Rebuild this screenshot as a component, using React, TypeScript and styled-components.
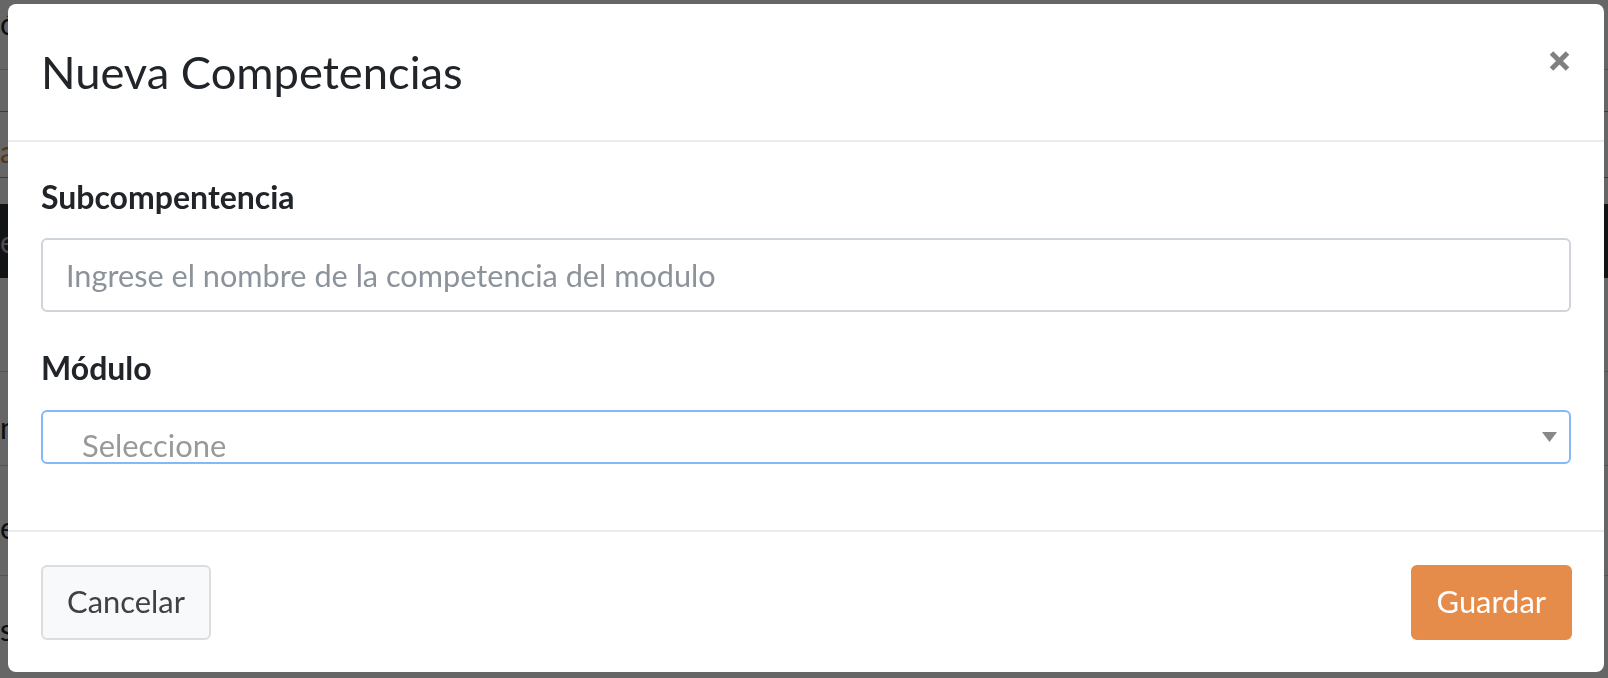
import React from "react";
import styled, { createGlobalStyle } from "styled-components";

const GlobalStyle = createGlobalStyle`
  html, body { margin: 0; padding: 0; }
  body {
    background: #ffffff;
    font-family: Lato, "Liberation Sans", sans-serif;
    color: #212529;
    overflow: hidden;
  }
  * { box-sizing: border-box; }
`;

const Page = styled.div`
  width: 1608px;
  height: 678px;
  display: flex;
  flex-direction: column;
  overflow: hidden;
`;

const PageRow = styled.div<{ $h: number; $line?: string; $bg?: string; $color?: string; $pad?: number }>`
  height: ${(p) => p.$h}px;
  flex-shrink: 0;
  border-bottom: ${(p) => (p.$line ? `1px solid ${p.$line}` : "none")};
  background: ${(p) => p.$bg || "transparent"};
  color: ${(p) => p.$color || "#222"};
  font-size: 30px;
  line-height: 1;
  padding-top: ${(p) => p.$pad ?? 0}px;
  padding-left: 0;
`;

const Overlay = styled.div`
  position: fixed;
  inset: 0;
  background: rgba(0, 0, 0, 0.6);
  display: flex;
  padding: 4px 4px 6px 8px;
`;

const Dialog = styled.div`
  flex: 1;
  background: #ffffff;
  border-radius: 8px;
  display: flex;
  flex-direction: column;
  overflow: hidden;
`;

const Header = styled.div`
  height: 138px;
  flex-shrink: 0;
  padding: 0 34px 0 33px;
  border-bottom: 2px solid #ebebf0;
  display: flex;
  align-items: center;
  justify-content: space-between;
`;

const Title = styled.h4`
  margin: 0;
  font-size: 45.3px;
  font-weight: 400;
  line-height: 1.2;
  color: #212529;
`;

const CloseButton = styled.button`
  align-self: flex-start;
  margin-top: 46px;
  width: 21px;
  height: 22px;
  padding: 0;
  border: 0;
  background: transparent;
  display: flex;
  cursor: pointer;
`;

const Body = styled.div`
  flex: 1;
  padding: 36px 33px 0 33px;
  display: flex;
  flex-direction: column;
  gap: 37px;
`;

const Group = styled.div`
  display: flex;
  flex-direction: column;
  gap: 22px;
`;

const Label = styled.label`
  font-size: 32px;
  font-weight: 700;
  line-height: 1.2;
  color: #212529;
`;

const TextInput = styled.input`
  height: 74px;
  width: 100%;
  border: 2px solid #ced4da;
  border-radius: 6px;
  padding: 0 23px;
  font-family: inherit;
  font-size: 30.7px;
  color: #495057;
  outline: none;
  &::placeholder {
    color: #8c939a;
  }
`;

const SelectBox = styled.div`
  height: 54px;
  border: 2px solid #86b7f7;
  border-radius: 6px;
  display: flex;
  align-items: center;
  justify-content: space-between;
  padding: 0 12px 0 39px;
  overflow: hidden;
`;

const SelectText = styled.span`
  align-self: flex-start;
  padding-top: 15px;
  font-size: 30.9px;
  line-height: 1.2;
  color: #999999;
`;

const Footer = styled.div`
  height: 142px;
  flex-shrink: 0;
  border-top: 2px solid #ebebf0;
  padding: 0 32px 0 33px;
  display: flex;
  align-items: center;
  justify-content: space-between;
`;

const Button = styled.button<{ $variant: "light" | "primary" }>`
  height: 75px;
  padding: 0 24px;
  border-radius: 6px;
  font-family: inherit;
  font-size: 30.9px;
  line-height: 1;
  cursor: pointer;
  border: 2px solid ${(p) => (p.$variant === "primary" ? "#e58c4a" : "#dddddd")};
  background: ${(p) => (p.$variant === "primary" ? "#e58c4a" : "#f8f9fa")};
  color: ${(p) => (p.$variant === "primary" ? "#ffffff" : "#3f4144")};
`;

export default function App() {
  return (
    <>
      <GlobalStyle />
      <Page>
        <PageRow $h={70} $line="#cfcfcf" $pad={8}>ó</PageRow>
        <PageRow $h={42} $line="#d9853f" />
        <PageRow $h={66} $line="#d9853f" $color="#d9853f" $pad={24}>a</PageRow>
        <PageRow $h={26} />
        <PageRow $h={74} $bg="#2e3035" $color="#b9bcc0" $pad={22}>e</PageRow>
        <PageRow $h={94} $line="#cfcfcf" />
        <PageRow $h={94} $line="#cfcfcf" $pad={40}>m</PageRow>
        <PageRow $h={110} $line="#cfcfcf" $pad={46}>e</PageRow>
        <PageRow $h={100} $pad={38}>s</PageRow>
      </Page>
      <Overlay>
        <Dialog role="dialog">
          <Header>
            <Title>Nueva Competencias</Title>
            <CloseButton aria-label="Cerrar">
              <svg width="21" height="22" viewBox="0 0 21 22">
                <path d="M2.5 3 L18.5 19 M18.5 3 L2.5 19" stroke="#808080" strokeWidth="5" strokeLinecap="butt" />
              </svg>
            </CloseButton>
          </Header>
          <Body>
            <Group>
              <Label>Subcompentencia</Label>
              <TextInput placeholder="Ingrese el nombre de la competencia del modulo" />
            </Group>
            <Group>
              <Label>Módulo</Label>
              <SelectBox>
                <SelectText>Seleccione</SelectText>
                <svg width="15" height="10" viewBox="0 0 15 10">
                  <path d="M0 0 H15 L7.5 10 Z" fill="#888888" />
                </svg>
              </SelectBox>
            </Group>
          </Body>
          <Footer>
            <Button $variant="light">Cancelar</Button>
            <Button $variant="primary">Guardar</Button>
          </Footer>
        </Dialog>
      </Overlay>
    </>
  );
}
